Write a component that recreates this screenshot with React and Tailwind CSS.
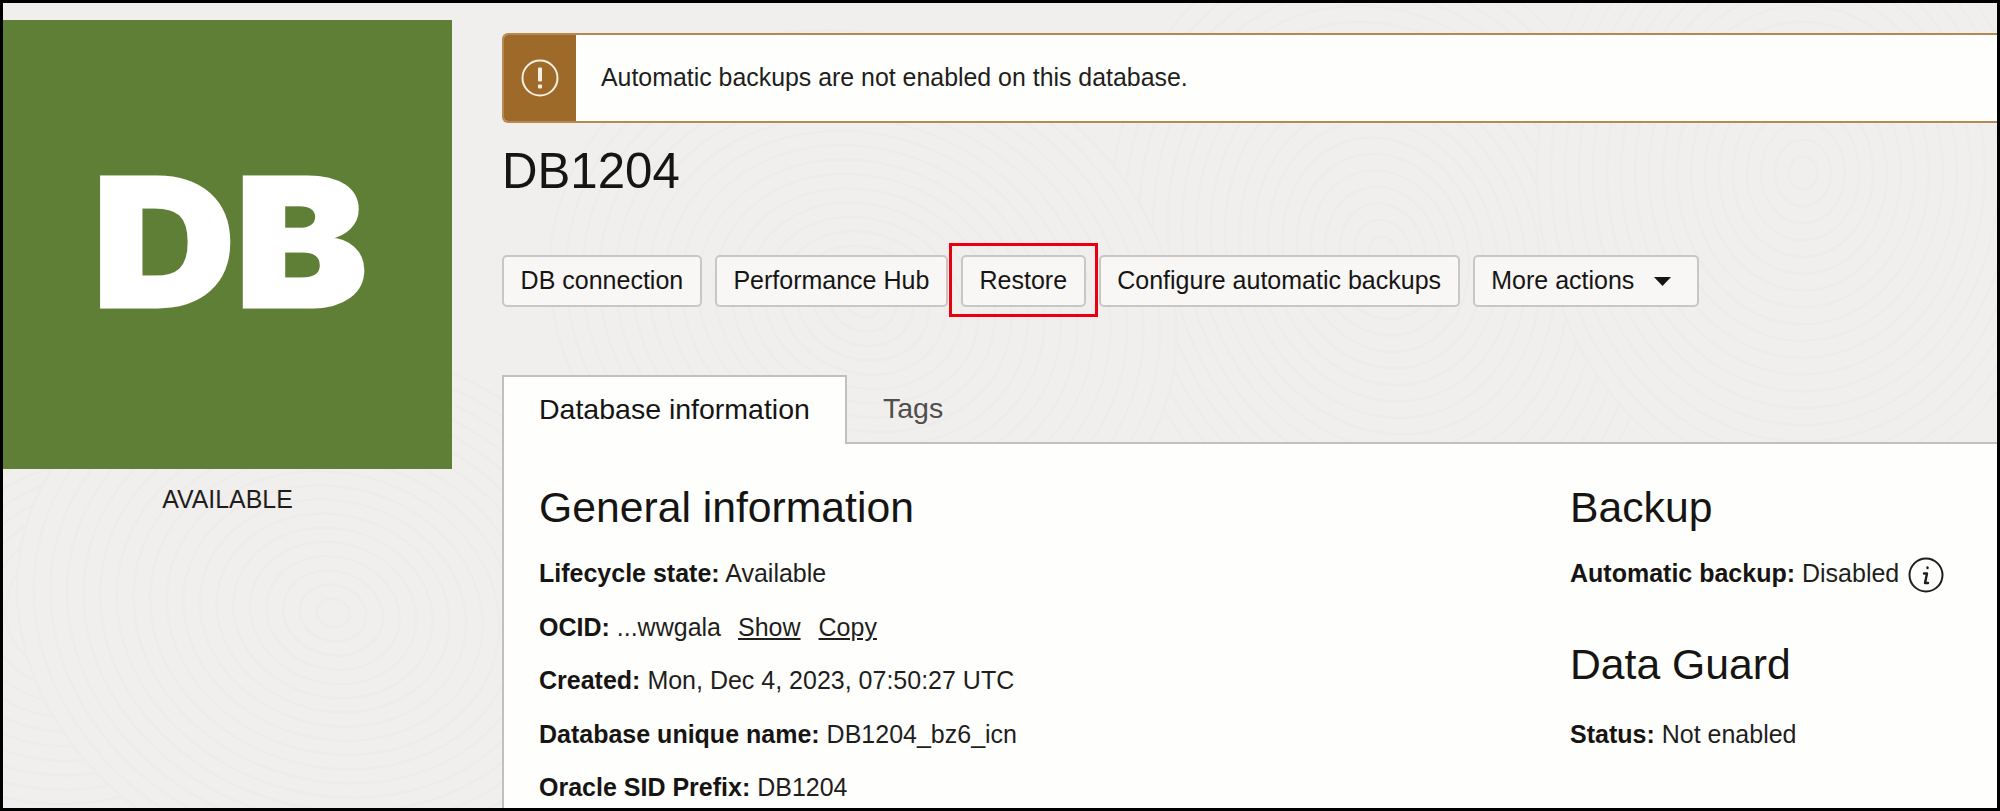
const font = "font-['Liberation_Sans',Arial,sans-serif]";

const Button = ({ children, className = "" }) => (
  <button className={`h-[52px] shrink-0 rounded-[5px] border-2 border-[#c9c7c5] bg-[#f8f7f5] px-[16.6px] text-[25px] text-[#161513] ${className}`}>
    {children}
  </button>
);

const Row = ({ label, children }) => (
  <p className="h-[53.6px] text-[25px] leading-[53.6px] text-[#1f1e1c] whitespace-nowrap">
    <span className="font-bold text-[#161513]">{label}</span> {children}
  </p>
);

// faint fingerprint swirls on the page background
const radii = [266, 252, 238, 224, 210, 196, 182, 168, 154, 140, 126, 112, 98, 84, 70, 56, 42, 28, 14];

const Swirl = ({ cx, cy, rotate = 0 }) => (
  <g transform={`rotate(${rotate} ${cx} ${cy})`} fill="#f1efed" stroke="#edecea" strokeWidth="2.5">
    {radii.map((r) => (
      <ellipse key={r} cx={cx} cy={cy} rx={r * 1.2} ry={r} />
    ))}
  </g>
);

const App = () => {
  return (
    <div className={`${font} relative h-[811px] w-[2000px] overflow-hidden border-[3px] border-black bg-[#f1efed]`}>
      <svg className="absolute inset-0 h-full w-full" aria-hidden="true">
        <Swirl cx={1380} cy={250} rotate={70} />
        <Swirl cx={860} cy={300} rotate={20} />
        <Swirl cx={1800} cy={170} rotate={90} />
        <Swirl cx={85} cy={600} rotate={-20} />
        <Swirl cx={330} cy={610} rotate={15} />
      </svg>

      <div className="relative flex h-full">
        {/* left column: resource tile */}
        <div className="w-[449px] shrink-0 pt-[17px]">
          <div className="flex h-[449px] items-center justify-center bg-[#5f7f36]">
            <span className="ml-[5px] mb-[3px] scale-x-[1.11] font-['Inter',sans-serif] text-[178px] font-black leading-none text-white [-webkit-text-stroke:3px_white]">DB</span>
          </div>
          <p className="mt-[14px] text-center text-[24.9px] leading-[32px] text-[#1f1e1c]">AVAILABLE</p>
        </div>

        {/* right column */}
        <div className="ml-[50px] min-w-0 flex-1 pt-[30px]">
          <div className="flex h-[90px] overflow-hidden rounded-l-[6px] border-y-2 border-l-2 border-[#b58a52] bg-[#fefefc]">
            <div className="flex w-[72px] shrink-0 items-center justify-center bg-[#9e6a2a]">
              <svg width="38" height="38" viewBox="0 0 38 38" fill="none">
                <circle cx="19" cy="19" r="17.5" stroke="#f6efe4" strokeWidth="2" />
                <rect x="17" y="8.5" width="4" height="14" rx="1" fill="#f6efe4" />
                <rect x="17" y="25.5" width="4" height="4" rx="1" fill="#f6efe4" />
              </svg>
            </div>
            <p className="flex items-center pl-[25px] text-[24.9px] text-[#1f1e1c]">Automatic backups are not enabled on this database.</p>
          </div>

          <h1 className="mt-[20px] text-[49.2px] leading-[56px] text-[#161513]">DB1204</h1>

          <div className="mt-[56px] flex items-center gap-[13px]">
            <Button>DB connection</Button>
            <Button>Performance Hub</Button>
            <Button className="relative">
              Restore
              <span className="absolute -inset-x-[14px] -top-[14px] -bottom-[12px] border-[3px] border-[#e8000f]" />
            </Button>
            <Button>Configure automatic backups</Button>
            <Button className="flex items-center gap-[20px] pr-[26px]">
              More actions
              <svg width="17" height="9" viewBox="0 0 17 9"><path d="M0 0h17L8.5 9z" fill="#161513" /></svg>
            </Button>
          </div>

          <div className="mt-[68px] flex h-[69px] border-b-2 border-[#c2c0be]">
            <div className="-mb-[2px] flex w-[345px] items-center border-x-2 border-t-2 border-[#c2c0be] bg-[#fefefc] pb-[2px] pl-[35px] text-[28.5px] text-[#161513]">
              Database information
            </div>
            <div className="flex items-center pb-[1px] pl-[36px] text-[28.5px] text-[#4f4e4c]">Tags</div>
          </div>

          <div className="flex h-[400px] border-l-2 border-[#c2c0be] bg-[#fefefc] pl-[35px]">
            <div className="w-[1031px] shrink-0">
              <h2 className="mt-[33px] mb-[10px] text-[42.7px] leading-[60px] text-[#161513]">General information</h2>
              <Row label="Lifecycle state:">Available</Row>
              <Row label="OCID:">
                ...wwgala
                <a className="ml-[17px] underline">Show</a>
                <a className="ml-[18px] underline">Copy</a>
              </Row>
              <Row label="Created:">Mon, Dec 4, 2023, 07:50:27 UTC</Row>
              <Row label="Database unique name:">DB1204_bz6_icn</Row>
              <Row label="Oracle SID Prefix:">DB1204</Row>
            </div>
            <div className="flex-1">
              <h2 className="mt-[33px] mb-[10px] text-[42.7px] leading-[60px] text-[#161513]">Backup</h2>
              <div className="flex items-center">
                <Row label="Automatic backup:">Disabled</Row>
                <svg className="ml-[9px] mt-[3px]" width="36" height="36" viewBox="0 0 36 36" fill="none">
                  <circle cx="18" cy="18" r="16.5" stroke="#1f1e1c" strokeWidth="2" />
                  <path d="M19.5 10.5v.5M16 16.5h3l-2 9.5h3" stroke="#1f1e1c" strokeWidth="2.4" strokeLinecap="round" strokeLinejoin="round" />
                </svg>
              </div>
              <h2 className="mt-[33px] mb-[14px] text-[42.7px] leading-[60px] text-[#161513]">Data Guard</h2>
              <Row label="Status:">Not enabled</Row>
            </div>
          </div>
        </div>
      </div>
    </div>
  );
};

export default App;
